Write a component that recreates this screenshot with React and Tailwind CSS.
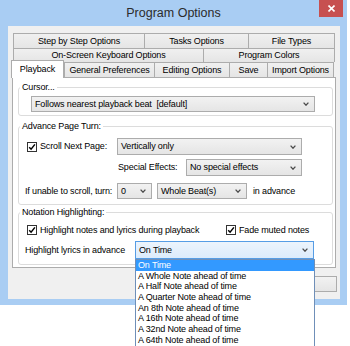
import React from 'react';

const Arrow = () => (
  <svg width="6" height="4" viewBox="0 0 6 4" className="shrink-0">
    <path d="M0.6 0.6L3 3.2L5.4 0.6" fill="none" stroke="#4a4a4a" strokeWidth="1.3" />
  </svg>
);

const Select = ({ className, text, focus }) => (
  <div
    className={`flex items-center justify-between pl-[3px] pr-[5px] border ${
      focus
        ? 'border-[#569de5] bg-gradient-to-b from-[#ecf4fc] to-[#dcecfc]'
        : 'border-[#acacac] bg-gradient-to-b from-[#f2f2f2] to-[#e5e5e5]'
    } ${className}`}
  >
    <span className="whitespace-pre">{text}</span>
    <Arrow />
  </div>
);

const Check = () => (
  <div className="w-[10px] h-[10px] border border-[#333] bg-white flex items-center justify-center shrink-0">
    <svg width="8" height="8" viewBox="0 0 8 8">
      <path d="M1.2 4.2L3.1 6.2L6.9 1.4" fill="none" stroke="#000" strokeWidth="1.5" />
    </svg>
  </div>
);

const Tab = ({ className, children, last }) => (
  <div
    className={`h-full flex items-center justify-center border-t border-l ${last ? 'border-r' : ''} border-[#acacac] bg-gradient-to-b from-[#f0f0f0] to-[#e5e5e5] ${className}`}
  >
    {children}
  </div>
);

const items = [
  'On Time',
  'A Whole Note ahead of time',
  'A Half Note ahead of time',
  'A Quarter Note ahead of time',
  'An 8th Note ahead of time',
  'A 16th Note ahead of time',
  'A 32nd Note ahead of time',
  'A 64th Note ahead of time',
];

export default function App() {
  return (
    <div className="relative w-[350px] h-[346px] bg-white overflow-hidden text-black text-[9px] leading-[11px] tracking-[-0.15px] font-['Liberation_Sans',Arial,sans-serif]">
      {/* window frame */}
      <div className="w-[347px] h-[305px] bg-[#a9cdf3] flex flex-col">
        <div className="h-[26px] flex items-start shrink-0">
          <div className="w-[28px]" />
          <div className="flex-1 h-[26px] flex items-center justify-center text-[12.5px] tracking-normal text-[#2b2b2b]">
            Program Options
          </div>
          <div className="w-[24px] h-[17px] mr-[4px] bg-[#c75050] flex items-center justify-center">
            <svg width="7" height="7" viewBox="0 0 7 7">
              <path d="M0.5 0.5L6.5 6.5M6.5 0.5L0.5 6.5" stroke="#fff" strokeWidth="1.6" />
            </svg>
          </div>
        </div>

        {/* client */}
        <div className="ml-[8px] w-[332px] h-[273px] bg-[#f0f0f0] flex flex-col">
          <div className="pt-[7px] pl-[5px]">
            <div className="flex h-[15px]">
              <Tab className="w-[131px]">Step by Step Options</Tab>
              <Tab className="w-[104px]">Tasks Options</Tab>
              <Tab className="w-[87px]" last>File Types</Tab>
            </div>
            <div className="flex h-[14px]">
              <Tab className="w-[190px]">On-Screen Keyboard Options</Tab>
              <Tab className="w-[132px]" last>Program Colors</Tab>
            </div>
            <div className="flex h-[15px] items-end">
              <div className="relative z-10 ml-[-2px] mb-[-1px] w-[53px] h-[18px] bg-white border-t border-l border-r border-[#acacac] flex justify-center pt-[3px]">
                Playback
              </div>
              <Tab className="w-[90px]">General Preferences</Tab>
              <Tab className="w-[75px]">Editing Options</Tab>
              <Tab className="w-[38px]">Save</Tab>
              <Tab className="w-[67px]" last>Import Options</Tab>
            </div>
          </div>

          {/* tab panel */}
          <div className="ml-[4px] w-[324px] h-[191px] bg-white border border-[#acacac] pl-[5px] pt-[4px] shrink-0">
            <fieldset className="w-[315px] border border-[#dcdcdc] rounded-[3px] pb-[3px]">
              <legend className="ml-[1px] px-[2px] leading-[11px]">Cursor...</legend>
              <Select className="ml-[12px] mt-[3px] w-[284px] h-[16px]" text="Follows nearest playback beat  [default]" />
            </fieldset>

            <fieldset className="mt-[5px] w-[315px] border border-[#dcdcdc] rounded-[3px] pb-[5px]">
              <legend className="ml-[1px] px-[2px] leading-[11px]">Advance Page Turn:</legend>
              <div className="mt-[6px] h-[17px] flex items-center">
                <div className="w-[98px] flex items-center pl-[8px]">
                  <Check />
                  <span className="ml-[3px]">Scroll Next Page:</span>
                </div>
                <Select className="w-[185px] h-[17px]" text="Vertically only" />
              </div>
              <div className="mt-[4px] h-[17px] flex items-center pl-[99px]">
                <span className="w-[68px]">Special Effects:</span>
                <Select className="w-[116px] h-[17px]" text="No special effects" />
              </div>
              <div className="mt-[7px] h-[16px] flex items-center pl-[6px]">
                <span className="w-[92px]">If unable to scroll, turn:</span>
                <Select className="w-[35px] h-[16px]" text="0" />
                <Select className="ml-[5px] w-[90px] h-[16px]" text="Whole Beat(s)" />
                <span className="ml-[6px]">in advance</span>
              </div>
            </fieldset>

            <fieldset className="mt-[2px] w-[315px] border border-[#dcdcdc] rounded-[3px] pb-[5px]">
              <legend className="ml-[1px] px-[2px] leading-[11px]">Notation Highlighting:</legend>
              <div className="mt-[6px] h-[12px] flex items-center pl-[8px]">
                <div className="w-[199px] flex items-center">
                  <Check />
                  <span className="ml-[3px]">Highlight notes and lyrics during playback</span>
                </div>
                <Check />
                <span className="ml-[3px]">Fade muted notes</span>
              </div>
              <div className="mt-[5px] h-[18px] flex items-center pl-[6px]">
                <span className="w-[110px]">Highlight lyrics in advance</span>
                <Select className="w-[179px] h-[18px]" text="On Time" focus />
              </div>
            </fieldset>
          </div>

          <div className="mt-[8px] flex justify-end pr-[3px]">
            <div className="w-[90px] h-[16px] border border-[#acacac] bg-gradient-to-b from-[#f2f2f2] to-[#e5e5e5] flex items-center justify-center">
              Close
            </div>
          </div>
        </div>
      </div>

      {/* open dropdown list */}
      <div className="absolute left-[135px] top-[259px] w-[180px] h-[88px] bg-white border border-[#6f8fb8]">
        {items.map((t, i) => (
          <div
            key={t}
            className={`h-[10.7px] leading-[10.7px] pl-[2px] whitespace-nowrap ${i === 0 ? 'bg-[#3399ff] text-white' : ''}`}
          >
            {t}
          </div>
        ))}
      </div>
    </div>
  );
}
